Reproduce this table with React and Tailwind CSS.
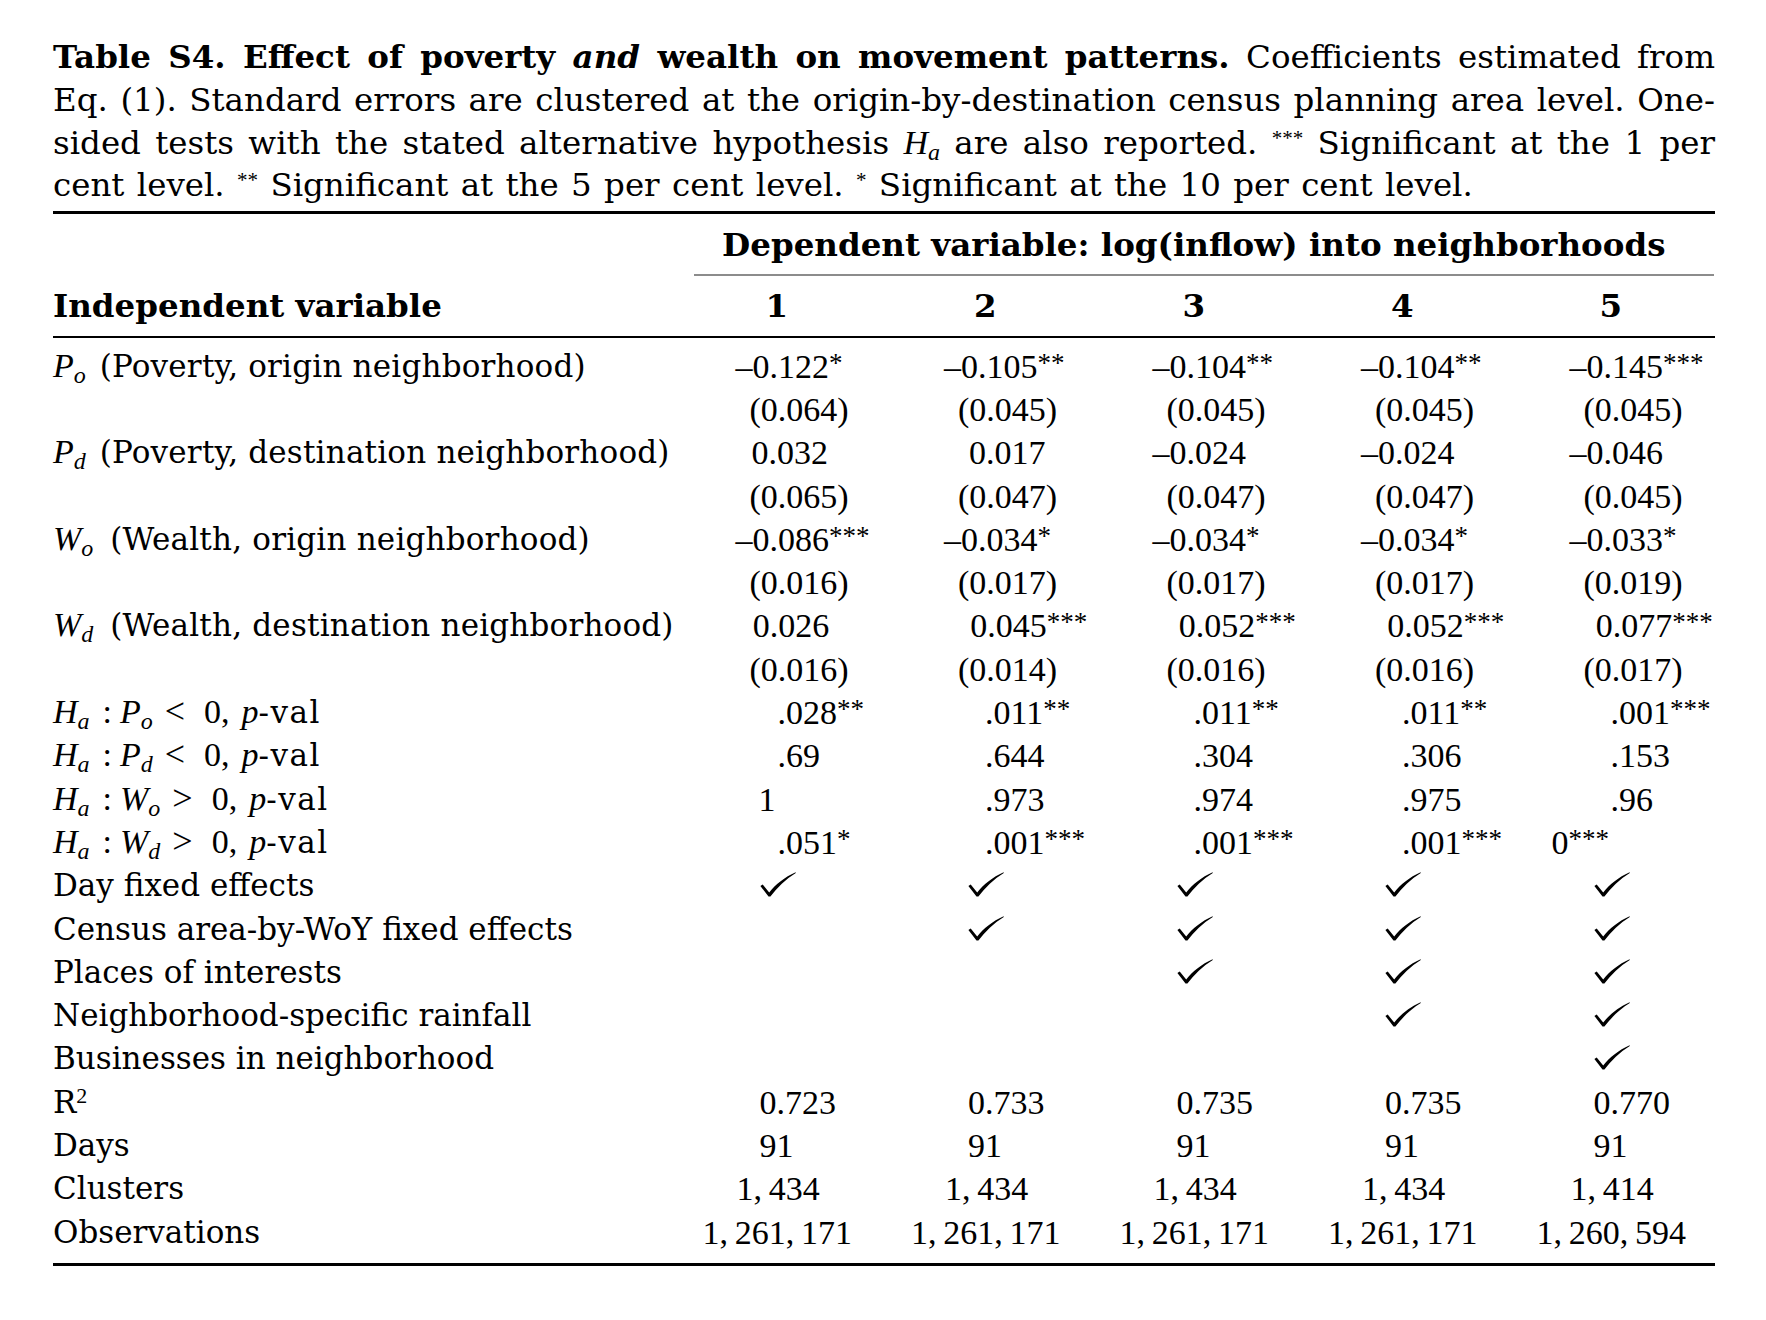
import React from "react";

const GRID = "grid grid-cols-[1fr_repeat(5,208.5px)]";
const NUM = "whitespace-nowrap font-['Liberation_Serif',serif] text-[34px]";
const JUST = "text-justify [text-align-last:justify]";

function St({ s }) {
  return <span className="relative -top-[6px] text-[27px] leading-none">{s}</span>;
}
function Cs({ s }) {
  return <span className="font-['Liberation_Serif',serif] relative -top-[9px] text-[21px] leading-none">{s}</span>;
}
function M({ children, className = "" }) {
  return (
    <span className={"font-['Liberation_Serif',serif] italic text-[34px] leading-none " + className}>{children}</span>
  );
}
function Sub({ children, className = "" }) {
  return (
    <span className={"font-['Liberation_Serif',serif] italic text-[24px] leading-none relative top-[6px] " + className}>
      {children}
    </span>
  );
}
function Rm({ children, className = "" }) {
  return <span className={"font-['Liberation_Serif',serif] text-[34px] leading-none " + className}>{children}</span>;
}

function Check() {
  return (
    <svg width="36" height="25" viewBox="0 0 36 25" className="block mt-[8px]">
      <path
        d="M0.4 13.9 L2.7 12.6 L9.2 20.4 C15.6 12.4 24.6 5 35.6 0.2 L35.8 1 C25.6 7.3 17.2 15.6 10.4 24.6 L8.5 24.6 Z"
        fill="#000"
      />
    </svg>
  );
}

const n = (v, s) => ({ pl: "pl-[63px]", v, s });
const p1 = (v, s) => ({ pl: "pl-[79px]", v, s });
const p = (v, s) => ({ pl: "pl-[88px]", v, s });
const se = (v) => ({ pl: "pl-[77px]", v: "(" + v + ")" });
const pv1 = (v, s) => ({ pl: "pl-[105px]", v, s });
const pv = (v, s) => ({ pl: "pl-[104px]", v, s });
const ck = { check: true };
const st = (v) => ({ pl: "pl-[87px]", v });
const cl = (v) => ({ pl: "pl-[64px]", v });
const ob = (v) => ({ pl: "pl-[30px]", v });
const T = "\u2009";
const D = "\u2013";

function PLabel({ L, s, rest, gap }) {
  return (
    <>
      <M>{L}</M>
      <Sub className={gap}>{s}</Sub> <span className="tracking-[0.2px]">{rest}</span>
    </>
  );
}

function HLabel({ L, s, op }) {
  return (
    <>
      <M>H</M>
      <Sub>a</Sub>
      <Rm className="ml-[13px]">:</Rm>
      <M className="ml-[8px]">{L}</M>
      <Sub>{s}</Sub>
      <Rm className="ml-[12px] text-[36px]">{op}</Rm>
      <Rm className="ml-[19px]">0,</Rm>
      <M className="ml-[12px]">p</M>
      <span className="tracking-[1.5px]">-val</span>
    </>
  );
}

const rows = [
  { label: <PLabel L="P" s="o" gap="mr-[4px]" rest="(Poverty, origin neighborhood)" />, cells: [n(D + "0.122", "*"), n(D + "0.105", "**"), n(D + "0.104", "**"), n(D + "0.104", "**"), n(D + "0.145", "***")] },
  { label: null, cells: [se("0.064"), se("0.045"), se("0.045"), se("0.045"), se("0.045")] },
  { label: <PLabel L="P" s="d" gap="mr-[4px]" rest="(Poverty, destination neighborhood)" />, cells: [p1("0.032"), p("0.017"), n(D + "0.024"), n(D + "0.024"), n(D + "0.046")] },
  { label: null, cells: [se("0.065"), se("0.047"), se("0.047"), se("0.047"), se("0.045")] },
  { label: <PLabel L="W" s="o" gap="mr-[7px]" rest="(Wealth, origin neighborhood)" />, cells: [n(D + "0.086", "***"), n(D + "0.034", "*"), n(D + "0.034", "*"), n(D + "0.034", "*"), n(D + "0.033", "*")] },
  { label: null, cells: [se("0.016"), se("0.017"), se("0.017"), se("0.017"), se("0.019")] },
  { label: <PLabel L="W" s="d" gap="mr-[7px]" rest="(Wealth, destination neighborhood)" />, cells: [p1("0.026"), p("0.045", "***"), p("0.052", "***"), p("0.052", "***"), p("0.077", "***")] },
  { label: null, cells: [se("0.016"), se("0.014"), se("0.016"), se("0.016"), se("0.017")] },
  { label: <HLabel L="P" s="o" op="<" />, cells: [pv1(".028", "**"), pv(".011", "**"), pv(".011", "**"), pv(".011", "**"), pv(".001", "***")] },
  { label: <HLabel L="P" s="d" op="<" />, cells: [pv1(".69"), pv(".644"), pv(".304"), pv(".306"), pv(".153")] },
  { label: <HLabel L="W" s="o" op=">" />, cells: [{ pl: "pl-[86px]", v: "1" }, pv(".973"), pv(".974"), pv(".975"), pv(".96")] },
  { label: <HLabel L="W" s="d" op=">" />, cells: [pv1(".051", "*"), pv(".001", "***"), pv(".001", "***"), pv(".001", "***"), { pl: "pl-[45px]", v: "0", s: "***" }] },
  { label: "Day fixed effects", cells: [ck, ck, ck, ck, ck] },
  { label: "Census area-by-WoY fixed effects", cells: [null, ck, ck, ck, ck] },
  { label: "Places of interests", cells: [null, null, ck, ck, ck] },
  { label: "Neighborhood-specific rainfall", cells: [null, null, null, ck, ck] },
  { label: "Businesses in neighborhood", cells: [null, null, null, null, ck] },
  {
    label: (
      <>
        R<span className="font-['Liberation_Serif',serif] relative -top-[10px] text-[22px] leading-none">2</span>
      </>
    ),
    cells: [st("0.723"), st("0.733"), st("0.735"), st("0.735"), st("0.770")],
  },
  { label: "Days", cells: [st("91"), st("91"), st("91"), st("91"), st("91")] },
  { label: "Clusters", cells: [cl("1," + T + "434"), cl("1," + T + "434"), cl("1," + T + "434"), cl("1," + T + "434"), cl("1," + T + "414")] },
  {
    label: "Observations",
    cells: [
      ob("1," + T + "261," + T + "171"),
      ob("1," + T + "261," + T + "171"),
      ob("1," + T + "261," + T + "171"),
      ob("1," + T + "261," + T + "171"),
      ob("1," + T + "260," + T + "594"),
    ],
  },
];

function Row({ label, cells }) {
  return (
    <div className={GRID + " h-[43.3px] leading-[43.3px]"}>
      <div className="whitespace-nowrap">{label}</div>
      {cells.map((c, i) => (
        <div key={i} className={NUM + " " + (c && c.pl ? c.pl : c && c.check ? "pl-[87px]" : "")}>
          {c && c.check ? <Check /> : null}
          {c && c.v ? c.v : null}
          {c && c.s ? <St s={c.s} /> : null}
        </div>
      ))}
    </div>
  );
}

export default function App() {
  return (
    <div className="w-[1766px] h-[1320px] bg-white text-black pl-[53px] pt-[36px] font-['DejaVu_Serif',serif] text-[31px]">
      <div className="w-[1662px]">
        <div className="leading-[42.8px] text-[32.5px]">
          <div className={JUST}>
            <b>
              Table S4. Effect of poverty <i>and</i> wealth on movement patterns.
            </b>{" "}
            Coefficients estimated from
          </div>
          <div className={JUST}>
            Eq. (1). Standard errors are clustered at the origin-by-destination census planning area level. One-
          </div>
          <div className={JUST}>
            sided tests with the stated alternative hypothesis <M>H</M>
            <Sub>a</Sub> are also reported. <Cs s="***" /> Significant at the 1 per
          </div>
          <div className="[word-spacing:2px]">
            cent level. <Cs s="**" /> Significant at the 5 per cent level. <Cs s="*" /> Significant at the 10 per cent
            level.
          </div>
        </div>

        <div className="mt-[4px] h-[3px] bg-black" />

        <div className={GRID + " mt-[8.5px] h-[43.3px] leading-[43.3px] font-bold text-[32.5px]"}>
          <div className="col-start-2 col-span-5 text-center whitespace-nowrap">
            Dependent variable: log(inflow) into neighborhoods
          </div>
        </div>

        <div className={GRID + " mt-[8px]"}>
          <div className="col-start-2 col-span-5 ml-[21px] mr-[1px] h-[2px] bg-[#8c8c8c]" />
        </div>

        <div className={GRID + " mt-[8.4px] h-[43.3px] leading-[43.3px] font-bold text-[32.5px]"}>
          <div className="whitespace-nowrap">Independent variable</div>
          <div className="text-center">1</div>
          <div className="text-center">2</div>
          <div className="text-center">3</div>
          <div className="text-center">4</div>
          <div className="text-center">5</div>
        </div>

        <div className="mt-[8.4px] h-[2px] bg-black" />

        <div className="mt-[6.6px]">
          {rows.map((r, i) => (
            <Row key={i} label={r.label} cells={r.cells} />
          ))}
        </div>

        <div className="mt-[9.6px] h-[3px] bg-black" />
      </div>
    </div>
  );
}
